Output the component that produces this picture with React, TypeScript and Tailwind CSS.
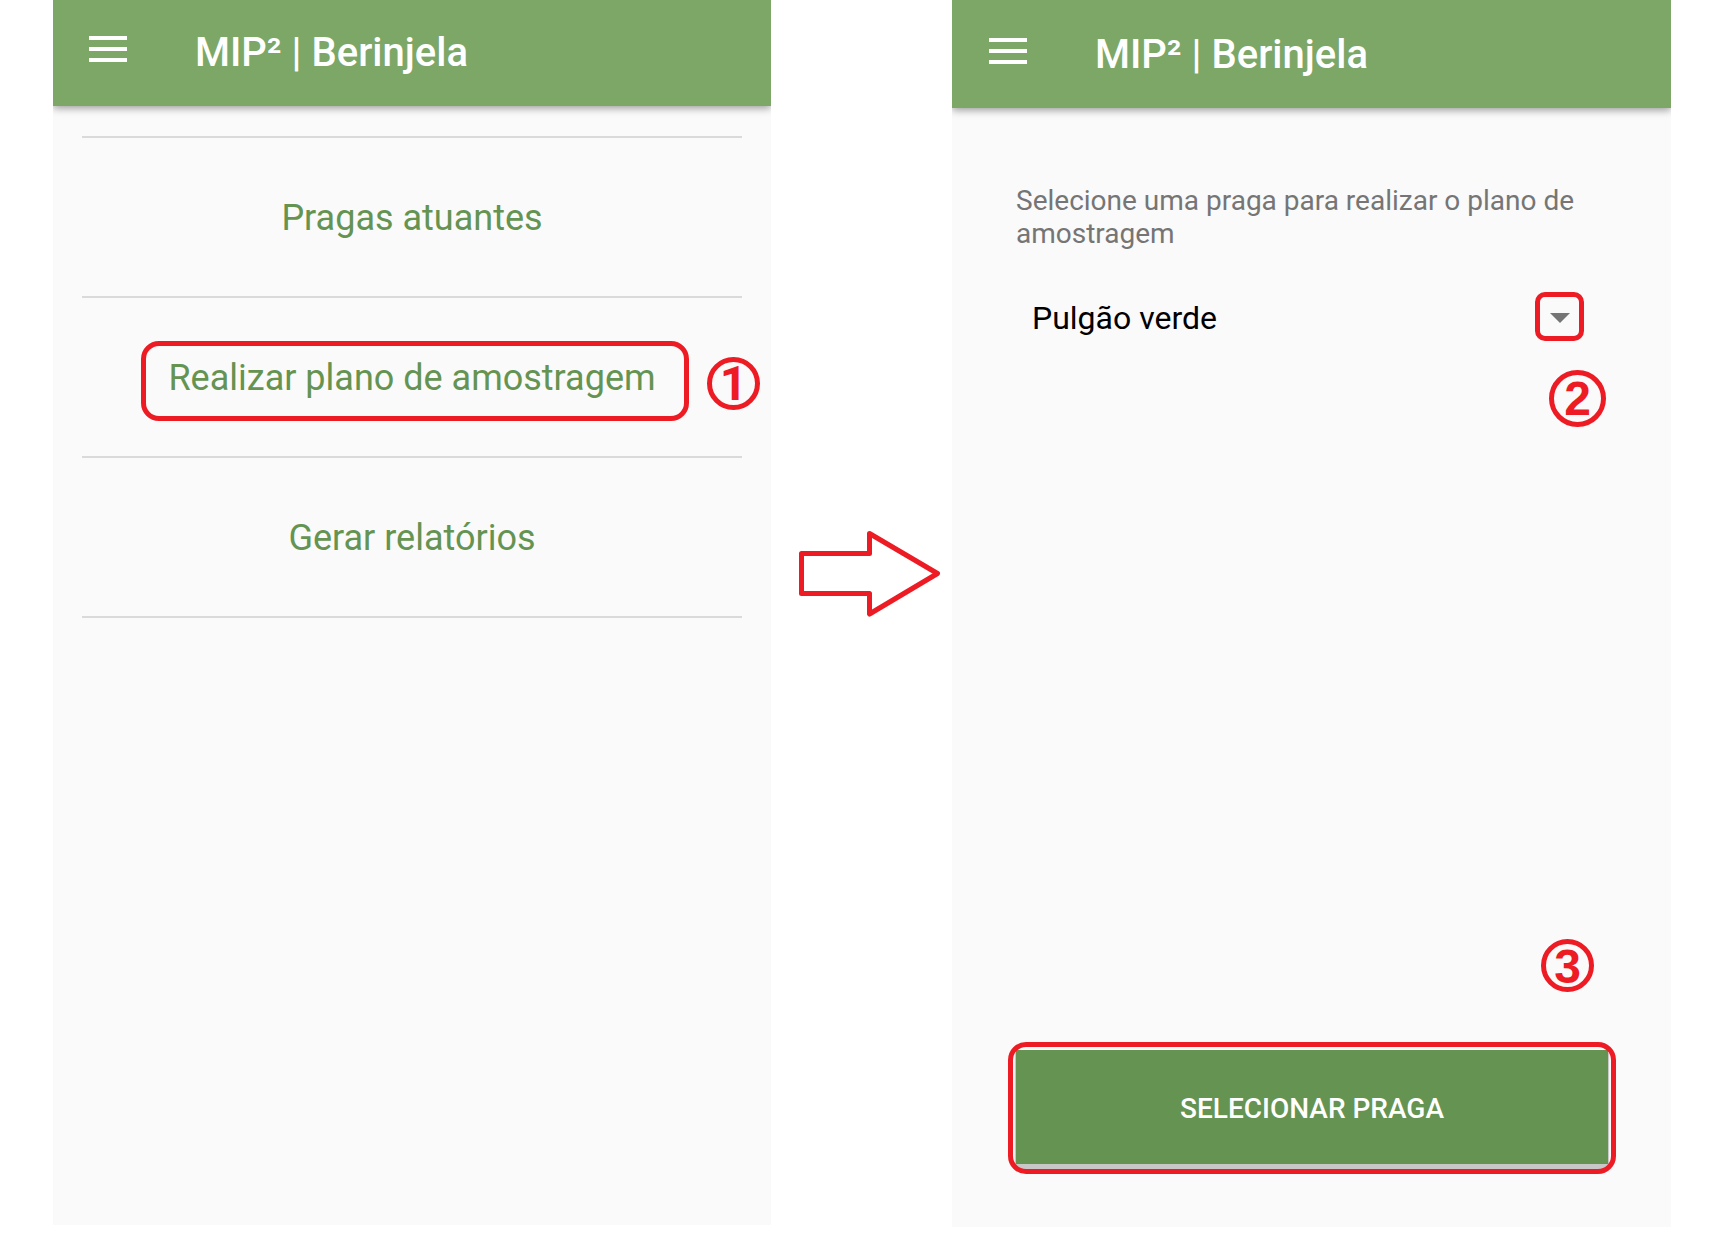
import React from "react";

function Step({ n, className }: { n: number; className: string }) {
  return (
    <span
      className={`pointer-events-none absolute flex items-center justify-center rounded-full border-5 border-[#ed1c24] text-[48px] leading-none font-bold text-[#ed1c24] ${className}`}
    >
      {n}
    </span>
  );
}

function AppBar({ className }: { className: string }) {
  return (
    <header
      className={`flex shrink-0 items-center bg-[#7ca767] shadow-[0_2px_8px_rgba(0,0,0,0.4)] ${className}`}
    >
      <button type="button" aria-label="Menu" className="mb-2 flex w-[38px] flex-col gap-[7px]">
        <span className="h-1 bg-white" />
        <span className="h-1 bg-white" />
        <span className="h-1 bg-white" />
      </button>
      <h1 className="ml-[68px] text-[40px] leading-none font-medium whitespace-nowrap text-white">
        MIP² | Berinjela
      </h1>
    </header>
  );
}

function MenuItem({ label, children }: { label: string; children?: React.ReactNode }) {
  return (
    <li className="relative flex h-40 items-center justify-center border-t-2 border-[#dadada] pt-0.5">
      <a href="#" className="text-4xl whitespace-nowrap text-[#659351]">
        {label}
      </a>
      {children}
    </li>
  );
}

function MenuScreen() {
  return (
    <section className="mb-[11px] overflow-hidden bg-[#fafafa]">
      <AppBar className="h-[106px] pl-9" />
      <ul className="mx-[29px] mt-[30px] border-b-2 border-[#dadada]">
        <MenuItem label="Pragas atuantes" />
        <MenuItem label="Realizar plano de amostragem">
          <span className="pointer-events-none absolute top-[43px] right-[53px] left-[59px] h-20 rounded-[18px] border-5 border-[#ed1c24]" />
          <Step n={1} className="top-[59px] -right-[18px] size-[53px] font-[Roboto,sans-serif]" />
        </MenuItem>
        <MenuItem label="Gerar relatórios" />
      </ul>
    </section>
  );
}

function PestScreen() {
  return (
    <section className="mb-[9px] flex flex-col overflow-hidden bg-[#fafafa]">
      <AppBar className="h-[108px] pt-0.5 pl-[37px]" />
      <div className="flex grow flex-col pt-[76px] pr-[63px] pb-[63px] pl-16">
        <label htmlFor="praga" className="text-[28px] leading-[33px] text-[#757575]">
          Selecione uma praga para realizar o plano de amostragem
        </label>
        <div className="relative mt-10 flex h-[54px] items-center">
          <select
            id="praga"
            className="h-full w-full appearance-none bg-transparent pt-0.5 pl-4 text-[32px] text-black outline-none"
          >
            <option>Pulgão verde</option>
          </select>
          <span className="pointer-events-none absolute top-0.5 right-6 flex size-[49px] items-center justify-center rounded-[10px] border-5 border-[#ed1c24]">
            <svg viewBox="0 0 20 10" className="mt-0.5 h-2.5 w-5" aria-hidden="true">
              <path d="M0 0h20L10 10z" fill="#757575" />
            </svg>
          </span>
          <Step n={2} className="top-20 right-0.5 size-[57px] font-['Liberation_Sans',sans-serif]" />
        </div>
        <div className="relative mt-auto">
          <button
            type="button"
            className="h-[114px] w-full bg-[#659351] pt-1 text-[28px] font-medium text-white shadow-[0_4px_1px_1px_#c8c8c8]"
          >
            SELECIONAR PRAGA
          </button>
          <span className="pointer-events-none absolute -inset-x-2 -top-2 -bottom-2.5 rounded-[18px] border-5 border-[#ed1c24]" />
          <Step
            n={3}
            className="-top-[111px] right-3.5 size-[53px] pt-0.5 font-['Liberation_Sans',sans-serif]"
          />
        </div>
      </div>
    </section>
  );
}

export default function App() {
  return (
    <main className="grid min-h-screen grid-cols-[718fr_181fr_719fr] bg-white px-[53px] font-[Roboto,sans-serif]">
      <MenuScreen />
      <div className="pt-[531px] pl-7">
        <svg viewBox="0 0 141 86" className="h-[86px] w-[141px]" aria-hidden="true">
          <path
            d="M2.5 22.5H70.5V2.5L138.5 42.5L70.5 83V62.5H2.5Z"
            fill="none"
            stroke="#ed1c24"
            strokeWidth="5"
            strokeLinejoin="round"
          />
        </svg>
      </div>
      <PestScreen />
    </main>
  );
}
